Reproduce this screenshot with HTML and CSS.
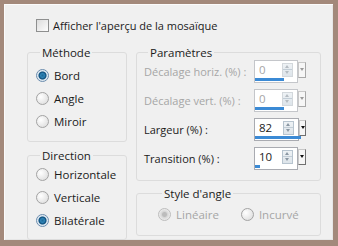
FILE: index.html
```html
<!DOCTYPE html>
<html>
<head>
    <title>Mosaïque</title>
    <link rel="stylesheet" href="styles.css">
</head>
<body>
    <div class="dialog">
        <label class="check">
            <span class="checkbox"></span>
            Afficher l'aperçu de la mosaïque
        </label>

        <div class="columns">
            <div class="col">
                <fieldset class="group method">
                    <legend>Méthode</legend>
                    <div class="option"><span class="radio on"></span>Bord</div>
                    <div class="option"><span class="radio"></span>Angle</div>
                    <div class="option"><span class="radio"></span>Miroir</div>
                </fieldset>

                <fieldset class="group direction">
                    <legend>Direction</legend>
                    <div class="option"><span class="radio"></span>Horizontale</div>
                    <div class="option"><span class="radio"></span>Verticale</div>
                    <div class="option"><span class="radio on"></span>Bilatérale</div>
                </fieldset>
            </div>

            <div class="col">
                <fieldset class="group params">
                    <legend>Paramètres</legend>
                    <div class="param disabled">
                        <span>Décalage horiz. (%) :</span>
                        <div class="spin">
                            <div class="field">
                                <div class="value">0<span class="arrows"></span></div>
                                <div class="bar" style="width: 29px"></div>
                            </div>
                            <span class="drop"></span>
                        </div>
                    </div>
                    <div class="param disabled">
                        <span>Décalage vert. (%) :</span>
                        <div class="spin">
                            <div class="field">
                                <div class="value">0<span class="arrows"></span></div>
                                <div class="bar" style="width: 29px"></div>
                            </div>
                            <span class="drop"></span>
                        </div>
                    </div>
                    <div class="param">
                        <span>Largeur (%) :</span>
                        <div class="spin">
                            <div class="field">
                                <div class="value">82<span class="arrows"></span></div>
                                <div class="bar" style="width: 46px"></div>
                            </div>
                            <span class="drop"></span>
                        </div>
                    </div>
                    <div class="param">
                        <span>Transition (%) :</span>
                        <div class="spin">
                            <div class="field">
                                <div class="value">10<span class="arrows"></span></div>
                                <div class="bar" style="width: 5px"></div>
                            </div>
                            <span class="drop"></span>
                        </div>
                    </div>
                </fieldset>

                <fieldset class="group corner disabled">
                    <legend>Style d'angle</legend>
                    <div class="inline">
                        <div class="option"><span class="radio dot"></span>Linéaire</div>
                        <div class="option"><span class="radio"></span>Incurvé</div>
                    </div>
                </fieldset>
            </div>
        </div>
    </div>
</body>
</html>
```

FILE: styles.css
```css
body {
    margin: 0;
    font-family: "Open Sans", "Noto Sans", sans-serif;
    font-size: 11px;
    color: #1b1b1b;
}
.dialog {
    box-sizing: border-box;
    width: 338px;
    height: 246px;
    border-style: solid;
    border-color: #a3897b;
    border-width: 4px 5px 6px 4px;
    background: #f0f0f0;
    box-shadow: inset 1px 1px 0 #fbfbfb, inset -1px -1px 0 #e6e6e6;
    padding: 14px 0 0 23px;
}
.check {
    display: flex;
    align-items: center;
    gap: 4px;
    height: 15px;
    margin-left: 9px;
}
.checkbox {
    width: 11px;
    height: 11px;
    border: 1px solid #8e8f8f;
    background: linear-gradient(135deg, #dcdcdc, #fdfdfd);
}
.columns {
    display: flex;
    gap: 9px;
    margin-top: 12px;
}
.col {
    display: flex;
    flex-direction: column;
}
.group {
    margin: 0;
    border: 1px solid #dcdcdc;
    border-radius: 3px;
    box-sizing: border-box;
}
.group legend {
    padding: 0 2px;
    margin-left: 4px;
    line-height: 15px;
    font-size: 11.5px;
}
.method, .direction {
    width: 100px;
    padding: 4px 8px 0 8px;
}
.method {
    height: 97px;
}
.direction {
    height: 92px;
    margin-top: 6px;
    padding-top: 0;
}
.option {
    display: flex;
    align-items: center;
    gap: 5px;
    height: 23px;
    font-size: 11.5px;
}
.radio {
    width: 11px;
    height: 11px;
    border: 1px solid #a3a3a3;
    border-radius: 50%;
    background: radial-gradient(circle at 35% 35%, #ffffff, #d8d8d8);
}
.radio.on {
    border-color: #6a8cae;
    background: radial-gradient(circle, #1e6a98 0, #2d82b5 2px, #0c4c7a 3.5px, #d4e3ef 4.5px, #f4f4f4 6px);
}
.radio.dot {
    border-color: #bdbdbd;
    background: radial-gradient(circle, #bcbcbc 0, #bcbcbc 2px, #d6d6d6 3px, #f1f1f1 6px);
}
.params {
    width: 185px;
    height: 136px;
    padding: 0 14px 0 7px;
}
.param {
    display: flex;
    align-items: center;
    justify-content: space-between;
    height: 23px;
    margin-bottom: 6px;
    font-size: 11px;
}
.disabled, .disabled .value {
    color: #a6a6a6;
}
.spin {
    display: flex;
    align-items: flex-start;
    width: 52px;
    height: 23px;
}
.field {
    display: flex;
    flex-direction: column;
    justify-content: space-between;
    box-sizing: border-box;
    width: 45px;
    height: 23px;
    border: 1px solid #a9abb1;
    background: #fff;
}
.disabled .field {
    border-color: #c4c6ca;
}
.value {
    display: flex;
    justify-content: space-between;
    align-items: center;
    padding: 2px 4px 0 4px;
    line-height: 14px;
    font-size: 11.5px;
    color: #1b1b1b;
}
.arrows {
    width: 9px;
    height: 12px;
    border: 1px solid #b7c4cf;
    background:
        linear-gradient(to bottom, transparent 5px, #c2cdd6 5px, #c2cdd6 6px, transparent 6px),
        linear-gradient(to bottom, #eef2f5, #dde4ea);
    position: relative;
}
.arrows::before, .arrows::after {
    content: "";
    position: absolute;
    left: 2px;
    border-left: 2.5px solid transparent;
    border-right: 2.5px solid transparent;
}
.arrows::before {
    top: 1px;
    border-bottom: 3px solid #8a97a3;
}
.arrows::after {
    top: 7px;
    border-top: 3px solid #8a97a3;
}
.disabled .arrows {
    border-color: #d3d8dc;
}
.disabled .arrows::before {
    border-bottom-color: #b5bcc2;
}
.disabled .arrows::after {
    border-top-color: #b5bcc2;
}
.bar {
    height: 3px;
    margin: 0 0 1px 0;
    background: #3b8ad5;
}
.drop {
    position: relative;
    box-sizing: border-box;
    width: 8px;
    height: 16px;
    margin-top: 2px;
    border: 1px solid #c8c8c8;
    border-right-color: #707070;
    border-bottom-color: #707070;
    background: #f6f6f6;
}
.drop::after {
    content: "";
    position: absolute;
    top: 5px;
    left: 1px;
    border-left: 2px solid transparent;
    border-right: 2px solid transparent;
    border-top: 3px solid #111;
}
.disabled .drop {
    border-right-color: #a8a8a8;
    border-bottom-color: #a8a8a8;
}
.disabled .drop::after {
    border-top-color: #9a9a9a;
}
.corner {
    width: 185px;
    height: 50px;
    margin-top: 5px;
    padding: 0 8px 0 21px;
}
.corner legend {
    color: #1b1b1b;
}
.inline {
    display: flex;
    gap: 22px;
    height: 26px;
    align-items: center;
}
```
